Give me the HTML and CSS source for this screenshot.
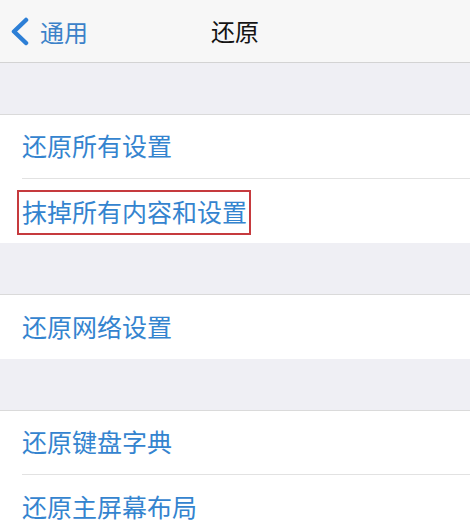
FILE: index.html
```html
<!DOCTYPE html>
<html lang="zh-CN">
<head>
  <meta charset="UTF-8">
  <meta name="viewport" content="width=device-width, initial-scale=1.0">
  <title>还原</title>
  <link rel="stylesheet" href="styles.css">
</head>
<body>
  <div class="page">
    <header class="nav-bar">
      <div class="back">
        <svg class="chevron" width="22" height="30" viewBox="0 0 22 30">
          <path d="M18 4 L6 15.5 L18 27" fill="none" stroke="#2d7fd6" stroke-width="4.5" stroke-linecap="round" stroke-linejoin="round"/>
        </svg>
        <span>通用</span>
      </div>
      <h1 class="title">还原</h1>
    </header>

    <div class="gap"></div>
    <div class="group">
      <div class="row">还原所有设置</div>
      <div class="row"><span class="marked">抹掉所有内容和设置</span></div>
    </div>

    <div class="gap"></div>
    <div class="group">
      <div class="row">还原网络设置</div>
    </div>

    <div class="gap"></div>
    <div class="group">
      <div class="row">还原键盘字典</div>
      <div class="row">还原主屏幕布局</div>
    </div>
  </div>
</body>
</html>
```

FILE: styles.css
```css
body {
  margin: 0;
  background-color: white;
  font-family: "Noto Sans CJK SC", "Noto Sans", sans-serif;
}

.page {
  margin: 0 2px 0 0;
  overflow: hidden;
}

.nav-bar {
  position: relative;
  height: 62px;
  background-color: #f7f7f7;
  border-bottom: 1px solid #d3d3d3;
  display: flex;
  align-items: center;
  justify-content: center;
}

.back {
  position: absolute;
  left: 8px;
  top: 0;
  height: 62px;
  display: flex;
  align-items: center;
  gap: 10px;
  color: #3b82c9;
  font-size: 24px;
}

.chevron {
  display: block;
}

.title {
  margin: 0 0 2px 0;
  font-size: 24px;
  font-weight: 400;
  color: #141414;
}

.gap {
  height: 51px;
  background-color: #efeff4;
  border-bottom: 1px solid #dadada;
}

.group {
  background-color: white;
  padding-left: 22px;
}

.row {
  height: 64px;
  box-sizing: border-box;
  padding-bottom: 3px;
  display: flex;
  align-items: center;
  font-size: 25px;
  color: #3484cf;
  border-bottom: 1px solid #e2e2e2;
}

.row:last-child {
  border-bottom: none;
}

.marked {
  margin-left: -5px;
  margin-top: 6px;
  padding: 6px 2px 9px 3px;
  border: 2px solid #c63a3e;
  line-height: 26px;
}
```
